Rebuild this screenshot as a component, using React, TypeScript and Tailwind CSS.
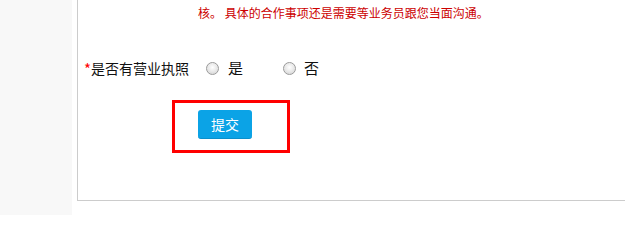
import React from "react";

function Radio() {
  return (
    <span className="inline-block w-[13px] h-[13px] rounded-full border border-[#9a9a9a] bg-[radial-gradient(circle_at_50%_40%,#ffffff_0%,#e6e6e6_55%,#c4c4c4_100%)] shadow-[inset_0_0_1px_#fff]" />
  );
}

export default function App() {
  return (
    <div className="w-[625px] h-[215px] flex bg-white overflow-hidden font-['Noto_Sans_CJK_SC',sans-serif]">
      <div className="w-[72px] h-full bg-[#f8f8f8] shrink-0" />
      <div className="flex-1 pl-[5px]">
        <div className="h-[201px] border-l border-b border-[#cccccc] flex flex-col">
          <div className="mt-[4px] pl-[120px] text-[12px] leading-[18px] text-[#cc0000] whitespace-nowrap">
            核。 具体的合作事项还是需要等业务员跟您当面沟通。
          </div>
          <div className="mt-[36px] h-[20px] flex items-center pl-[6px] text-[14px] text-[#111]">
            <span className="text-[#ff0000] text-[15px] leading-none self-start mt-[3px]">*</span>
            <span className="text-[14px]">是否有营业执照</span>
            <span className="ml-[17px] flex items-center">
              <Radio />
            </span>
            <span className="ml-[9px] text-[15px]">是</span>
            <span className="ml-[40px] flex items-center">
              <Radio />
            </span>
            <span className="ml-[8px] text-[15px]">否</span>
          </div>
          <div className="mt-[22px] ml-[94px] w-[118px] h-[53px] border-[3px] border-[#ff0000] pl-[23px] pt-[7px]">
            <button className="w-[54px] h-[29px] rounded-[3px] bg-[#0ba3e6] border-b border-[#0a8fcc] text-white text-[14px] leading-none">
              提交
            </button>
          </div>
        </div>
      </div>
    </div>
  );
}
